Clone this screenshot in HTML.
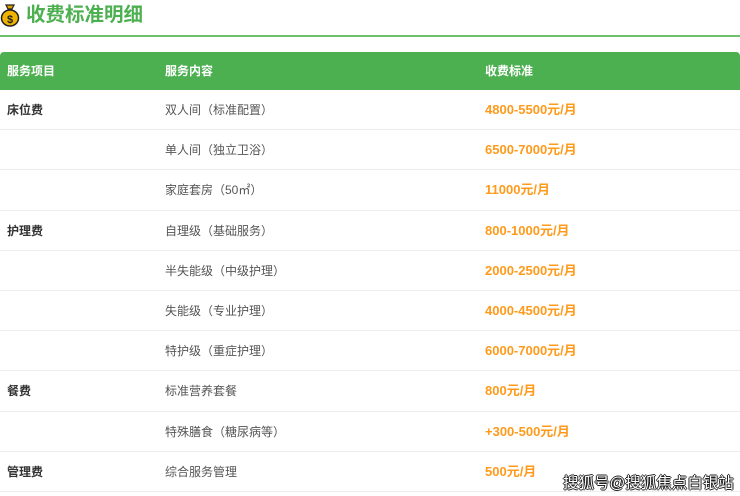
<!DOCTYPE html>
<html><head><meta charset="utf-8"><style>
*{margin:0;padding:0;box-sizing:border-box}
body{width:740px;height:496px;background:#fff;font-family:"Liberation Sans","Noto Sans CJK SC",sans-serif;position:relative;overflow:hidden}
.title{position:absolute;left:26px;top:1px;font-size:19.5px;font-weight:bold;color:#4caf50;line-height:28px}
.icon{position:absolute;left:0;top:3px}
.line{position:absolute;left:0;top:35px;width:740px;height:2px;background:#6cc16f}
.tbl{position:absolute;left:0;top:52px;width:740px}
.hd{height:38px;background:#4caf50;border-radius:4px 4px 0 0;color:#fff;font-weight:bold;font-size:12px;position:relative}
.row{height:40.2px;border-bottom:1px solid #ececec;position:relative;font-size:12px}
.c1,.c2,.c3{position:absolute;top:0;line-height:40px}
.hd .c1,.hd .c2,.hd .c3{line-height:38px}
.c1{left:7px;font-weight:bold;color:#333}
.hd .c1{color:#fff}
.c2{left:165px;color:#555}
.hd .c2{color:#fff}
.c3{left:485px;color:#ff9a1a;font-weight:bold;font-size:13px}
.hd .c3{color:#fff;font-size:12px}
.wm{position:absolute;left:563px;top:471px;font-size:15.5px;color:#fff;text-shadow:-1px 0 #222,1px 0 #222,0 -1px #222,0 1px #222}
</style></head><body>
<svg class="icon" width="20" height="24" viewBox="0 0 20 24"><path d="M6 2h8l-2 4H8z" fill="#e0a000" stroke="#222" stroke-width="1.2"/><ellipse cx="10" cy="15" rx="8.5" ry="8" fill="#f0b400" stroke="#222" stroke-width="1.5"/><text x="10" y="20" font-size="11" text-anchor="middle" fill="#222" font-weight="bold" font-family="Liberation Sans">$</text></svg>
<div class="title">收费标准明细</div>
<div class="line"></div>
<div class="tbl">
<div class="hd"><span class="c1">服务项目</span><span class="c2">服务内容</span><span class="c3">收费标准</span></div>
<div class="row"><span class="c1">床位费</span><span class="c2">双人间（标准配置）</span><span class="c3">4800-5500元/月</span></div>
<div class="row"><span class="c2">单人间（独立卫浴）</span><span class="c3">6500-7000元/月</span></div>
<div class="row"><span class="c2">家庭套房（50㎡）</span><span class="c3">11000元/月</span></div>
<div class="row"><span class="c1">护理费</span><span class="c2">自理级（基础服务）</span><span class="c3">800-1000元/月</span></div>
<div class="row"><span class="c2">半失能级（中级护理）</span><span class="c3">2000-2500元/月</span></div>
<div class="row"><span class="c2">失能级（专业护理）</span><span class="c3">4000-4500元/月</span></div>
<div class="row"><span class="c2">特护级（重症护理）</span><span class="c3">6000-7000元/月</span></div>
<div class="row"><span class="c1">餐费</span><span class="c2">标准营养套餐</span><span class="c3">800元/月</span></div>
<div class="row"><span class="c2">特殊膳食（糖尿病等）</span><span class="c3">+300-500元/月</span></div>
<div class="row"><span class="c1">管理费</span><span class="c2">综合服务管理</span><span class="c3">500元/月</span></div>
</div>
<div class="wm">搜狐号@搜狐焦点白银站</div>
</body></html>
